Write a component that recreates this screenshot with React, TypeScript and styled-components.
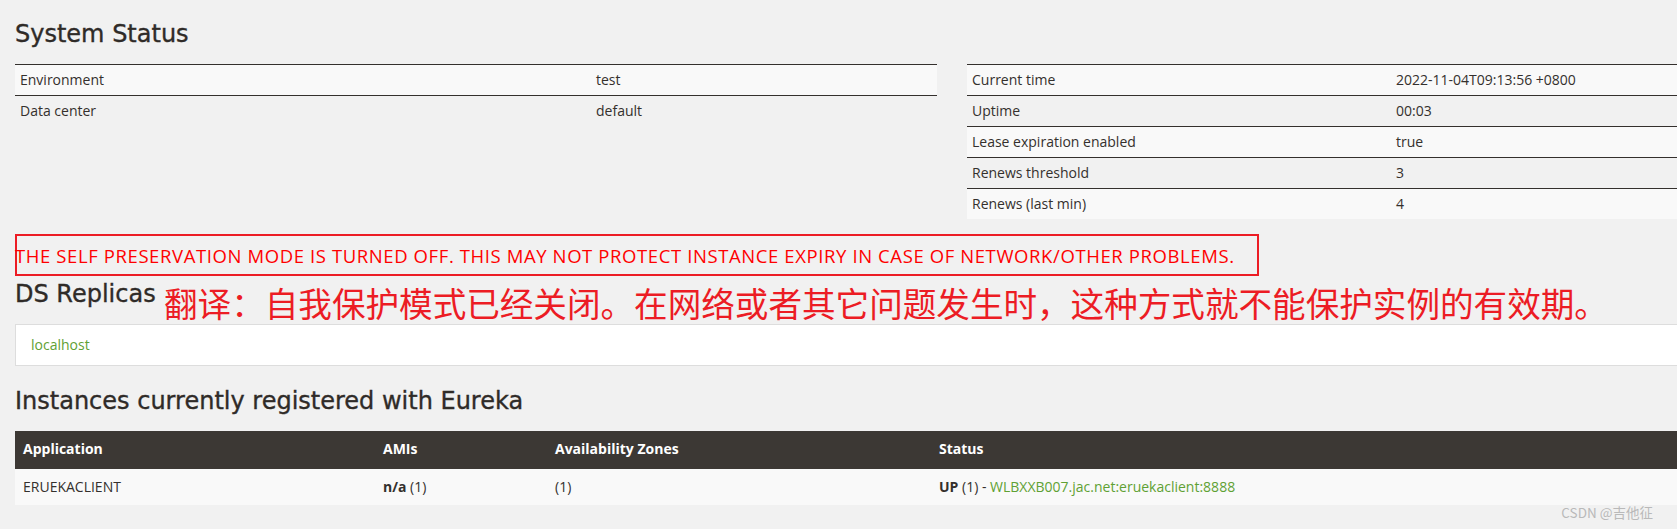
import React from "react";
import styled, { createGlobalStyle } from "styled-components";

const Global = createGlobalStyle`
  html, body {
    margin: 0;
    padding: 0;
    background: #f1f1f1;
    overflow: hidden;
  }
  body {
    font-family: "Open Sans", "Liberation Sans", sans-serif;
    color: #34302d;
    font-size: 14px;
    line-height: 20px;
  }
`;

const Viewport = styled.div`
  position: relative;
  width: 1677px;
  height: 529px;
  overflow: hidden;
`;

const Page = styled.div`
  width: 1904px;
  padding: 0 15px;
  box-sizing: border-box;
`;

const Heading = styled.h1<{ $top: number; $bottom: number }>`
  font-family: "DejaVu Sans", "Open Sans", sans-serif;
  font-weight: normal;
  font-size: 24px;
  line-height: 28px;
  color: #2f2b28;
  -webkit-text-stroke: 0.35px #2f2b28;
  margin: ${(p) => p.$top}px 0 ${(p) => p.$bottom}px;
  white-space: nowrap;
`;

const StatusGrid = styled.div`
  display: grid;
  grid-template-columns: 922px 922px;
  column-gap: 30px;
  align-items: start;
`;

const InfoTable = styled.table`
  width: 100%;
  border-collapse: collapse;
  table-layout: fixed;
`;

const InfoRow = styled.tr`
  border-top: 1px solid #34302d;
  &:nth-child(odd) {
    background: #f9f9f9;
  }
`;

const InfoCell = styled.td`
  padding: 5px;
  height: 20px;
  font-size: 14px;
  line-height: 20px;
  color: #34302d;
  white-space: nowrap;
`;

const Warning = styled.h4`
  box-sizing: border-box;
  width: 1244px;
  height: 42px;
  margin: 15px 0 0;
  padding: 8px 0 6px;
  border: 2px solid #ec1c24;
  font-family: "Open Sans", sans-serif;
  font-weight: normal;
  font-size: 18.5px;
  letter-spacing: 0.6px;
  line-height: 24px;
  color: #ff0000;
  white-space: nowrap;
  text-indent: -2px;
`;

const ReplicaHeader = styled.div`
  position: relative;
`;

const Translation = styled.span`
  position: absolute;
  left: 149px;
  top: 6px;
  font-family: "Noto Sans CJK SC", sans-serif;
  font-size: 33.6px;
  line-height: 34px;
  color: #ec1c24;
  white-space: nowrap;
`;

const ReplicaList = styled.ul`
  margin: 0;
  padding: 0;
  list-style: none;
`;

const ReplicaItem = styled.li`
  background: #fff;
  border: 1px solid #dddddd;
  padding: 10px 15px;
  line-height: 20px;
`;

const GreenLink = styled.a`
  color: #5fa134;
  text-decoration: none;
`;

const InstanceTable = styled.table`
  width: 100%;
  border-collapse: collapse;
  table-layout: fixed;
`;

const HeadCell = styled.th`
  background: #3c3834;
  color: #fff;
  text-align: left;
  font-weight: bold;
  font-size: 14px;
  line-height: 20px;
  padding: 8px 8px 10px;
  white-space: nowrap;
`;

const BodyRow = styled.tr`
  background: #f9f9f9;
`;

const BodyCell = styled.td`
  padding: 8px;
  font-size: 14px;
  line-height: 20px;
  color: #34302d;
  white-space: nowrap;
`;

const Strong = styled.b`
  font-weight: bold;
`;

const Watermark = styled.div`
  position: absolute;
  right: 24px;
  bottom: 7px;
  font-family: "Noto Sans CJK SC", sans-serif;
  font-size: 13.5px;
  line-height: 20px;
  color: #b9b9b9;
  white-space: nowrap;
`;

const leftRows = [
  ["Environment", "test"],
  ["Data center", "default"],
];

const rightRows = [
  ["Current time", "2022-11-04T09:13:56 +0800"],
  ["Uptime", "00:03"],
  ["Lease expiration enabled", "true"],
  ["Renews threshold", "3"],
  ["Renews (last min)", "4"],
];

function Info({ rows, labelWidth }: { rows: string[][]; labelWidth: number }) {
  return (
    <InfoTable>
      <colgroup>
        <col style={{ width: labelWidth }} />
        <col />
      </colgroup>
      <tbody>
        {rows.map(([k, v]) => (
          <InfoRow key={k}>
            <InfoCell>{k}</InfoCell>
            <InfoCell>{v}</InfoCell>
          </InfoRow>
        ))}
      </tbody>
    </InfoTable>
  );
}

export default function App() {
  return (
    <>
      <Global />
      <Viewport>
        <Page>
          <Heading $top={20} $bottom={16}>System Status</Heading>
          <StatusGrid>
            <Info rows={leftRows} labelWidth={576} />
            <Info rows={rightRows} labelWidth={424} />
          </StatusGrid>
          <Warning>
            THE SELF PRESERVATION MODE IS TURNED OFF. THIS MAY NOT PROTECT INSTANCE EXPIRY IN CASE OF NETWORK/OTHER PROBLEMS.
          </Warning>
          <ReplicaHeader>
            <Heading $top={4} $bottom={16}>DS Replicas</Heading>
            <Translation>翻译：自我保护模式已经关闭。在网络或者其它问题发生时，这种方式就不能保护实例的有效期。</Translation>
          </ReplicaHeader>
          <ReplicaList>
            <ReplicaItem>
              <GreenLink href="#">localhost</GreenLink>
            </ReplicaItem>
          </ReplicaList>
          <Heading $top={21} $bottom={16}>Instances currently registered with Eureka</Heading>
          <InstanceTable>
            <colgroup>
              <col style={{ width: 360 }} />
              <col style={{ width: 172 }} />
              <col style={{ width: 384 }} />
              <col />
            </colgroup>
            <thead>
              <tr>
                <HeadCell>Application</HeadCell>
                <HeadCell>AMIs</HeadCell>
                <HeadCell>Availability Zones</HeadCell>
                <HeadCell>Status</HeadCell>
              </tr>
            </thead>
            <tbody>
              <BodyRow>
                <BodyCell>ERUEKACLIENT</BodyCell>
                <BodyCell>
                  <Strong>n/a</Strong> (1)
                </BodyCell>
                <BodyCell>(1)</BodyCell>
                <BodyCell>
                  <Strong>UP</Strong> (1) - <GreenLink href="#">WLBXXB007.jac.net:eruekaclient:8888</GreenLink>
                </BodyCell>
              </BodyRow>
            </tbody>
          </InstanceTable>
        </Page>
        <Watermark>CSDN @吉他征</Watermark>
      </Viewport>
    </>
  );
}
